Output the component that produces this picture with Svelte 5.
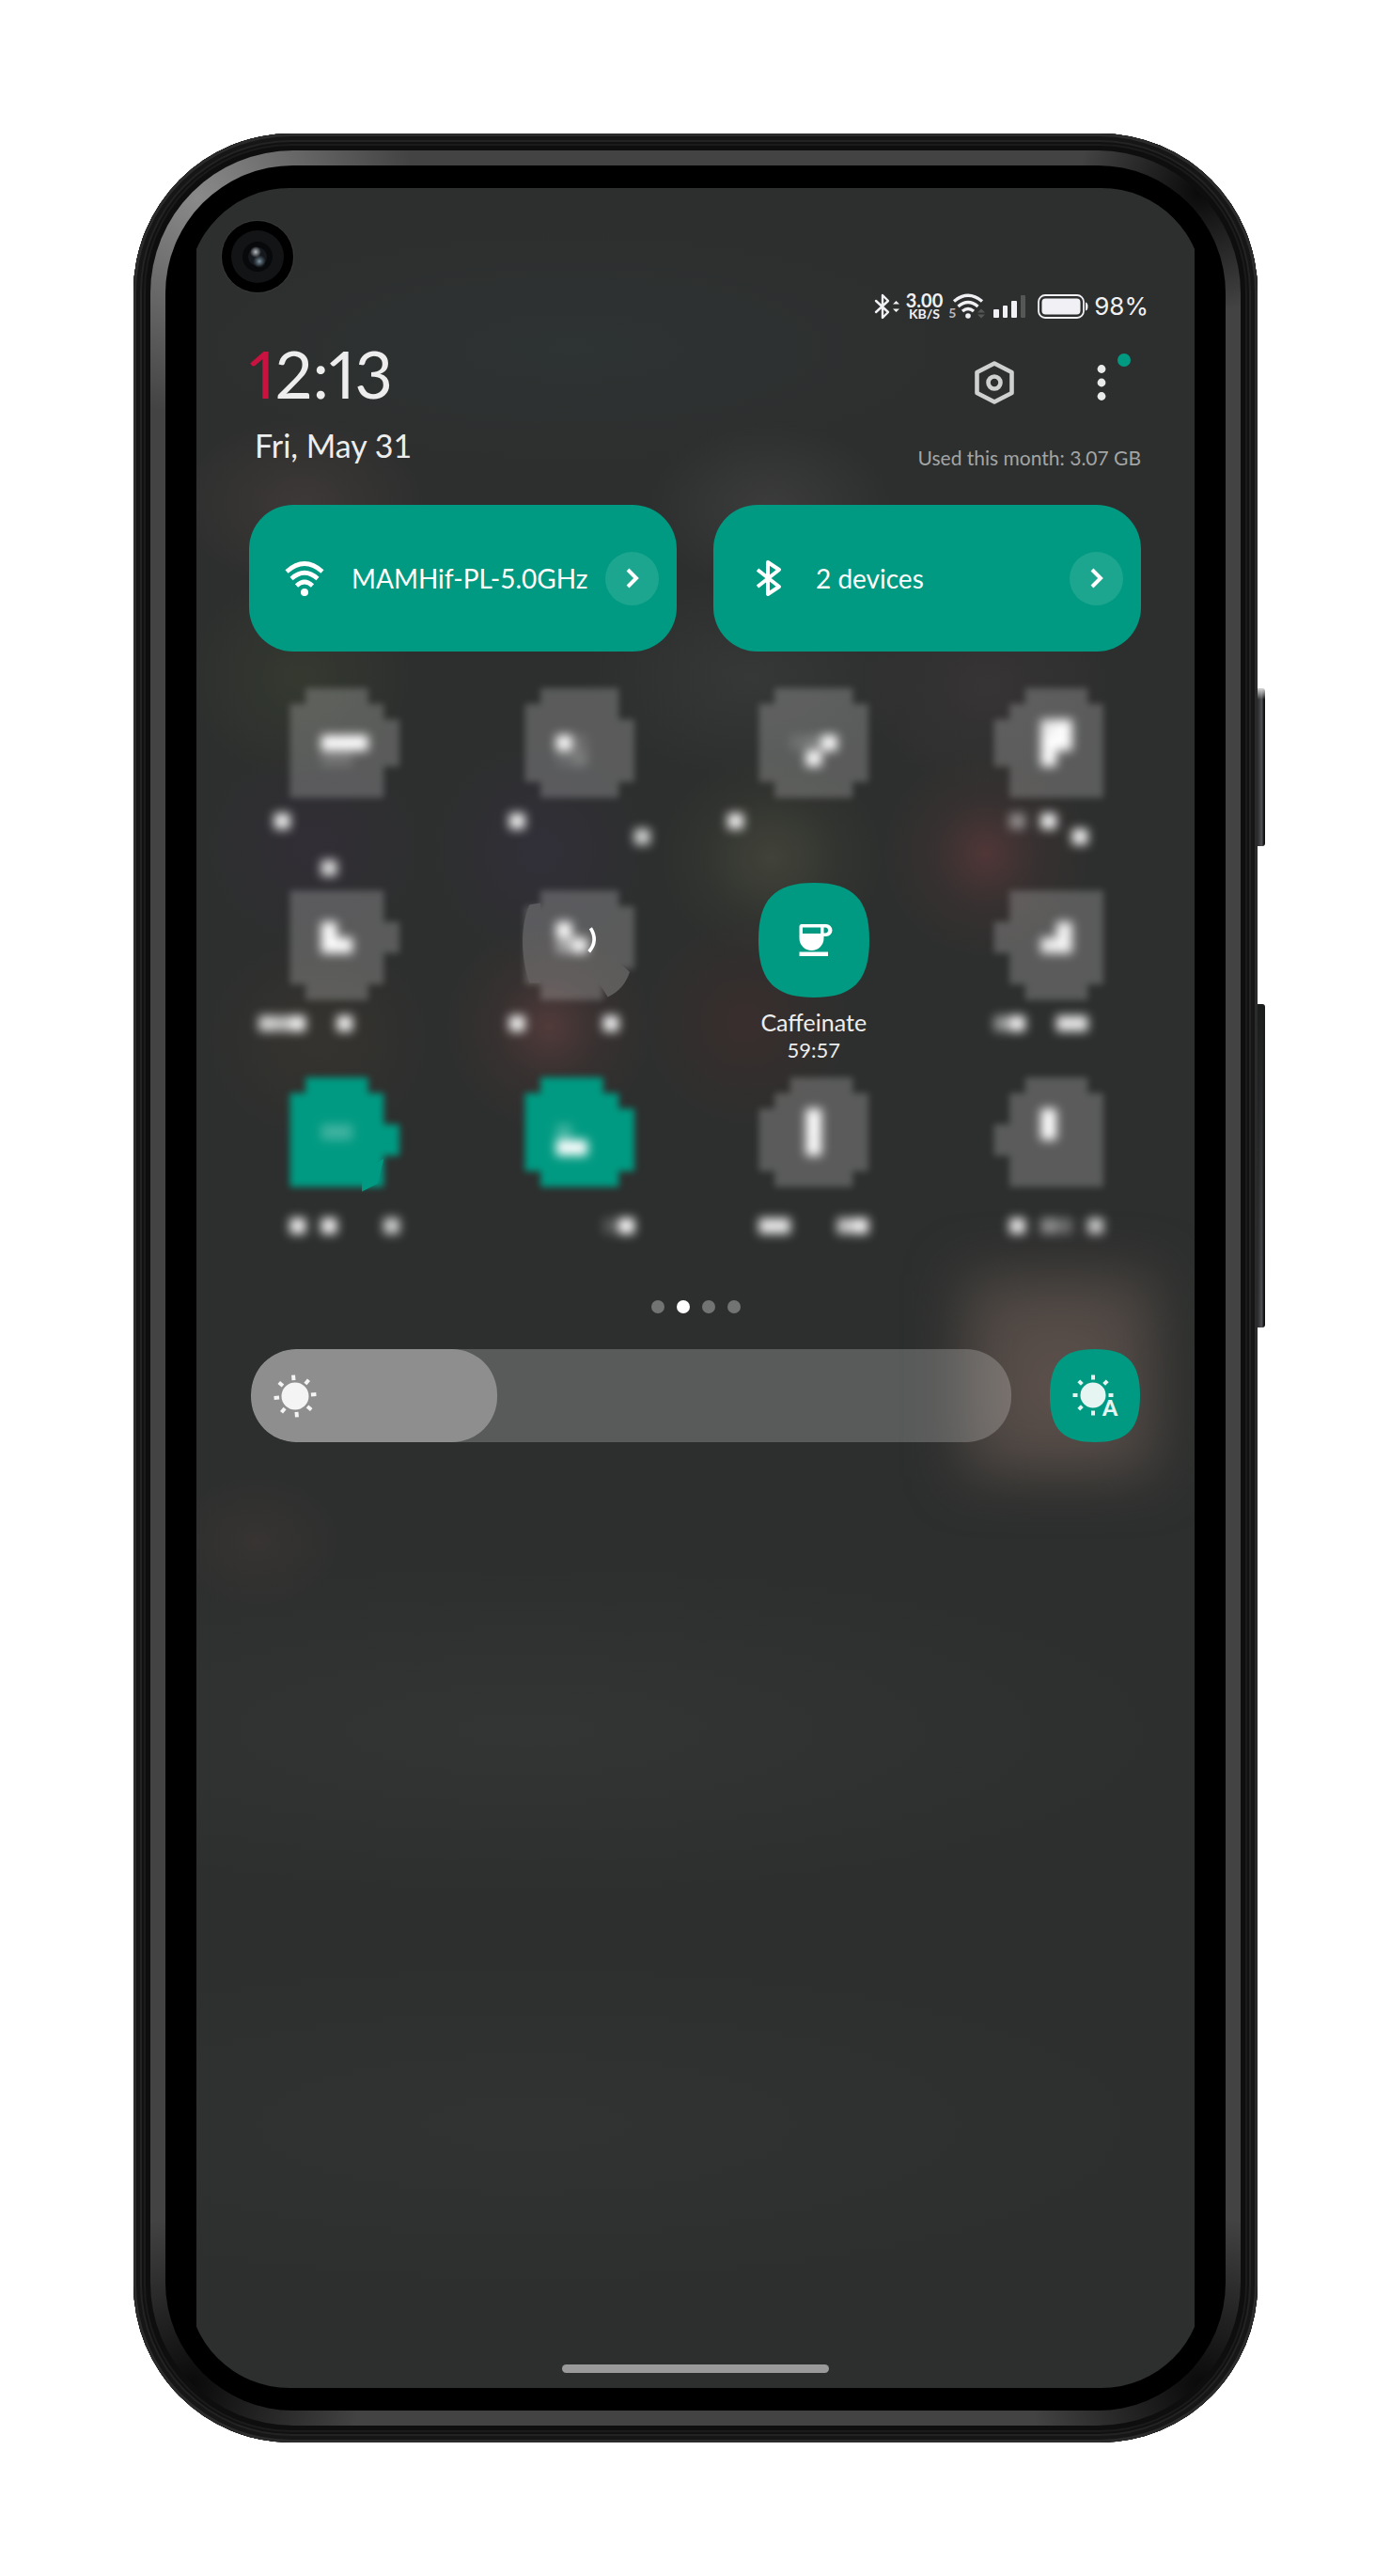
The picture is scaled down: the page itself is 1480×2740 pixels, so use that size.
<script>
  let brightness = $state(28.4);
  let page = $state(1);

  // Obscured tiles: each cell is [column, row, alpha] on a 15-column lattice.
  // `body` lists one [first, last] column span per row.
  const tiles = [
    {
      name: 'Tile 1', shift: 0,
      body: [[5, 8], [4, 9], [4, 10], [4, 10], [4, 10], [4, 9], [4, 9]],
      cells: [[6, 3, 1], [7, 3, 1], [8, 3, 1], [6, 4, 0.15], [7, 4, 0.15], [3, 8, 0.95], [6, 11, 0.85]]
    },
    {
      name: 'Tile 2', shift: 0,
      body: [[5, 9], [4, 9], [4, 10], [4, 10], [4, 10], [4, 10], [5, 9]],
      cells: [[6, 3, 1], [7, 3, 0.12], [7, 4, 0.2], [6, 4, 0.1], [3, 8, 0.95], [11, 9, 0.8]]
    },
    {
      name: 'Tile 3', shift: 0,
      body: [[5, 9], [4, 10], [4, 10], [4, 10], [4, 10], [4, 10], [5, 9]],
      cells: [[8, 3, 1], [7, 3, 0.2], [7, 4, 1], [6, 3, 0.12], [2, 8, 0.95]]
    },
    {
      name: 'Tile 4', shift: 0,
      body: [[6, 9], [5, 10], [4, 10], [4, 10], [4, 10], [5, 10], [5, 10]],
      cells: [[7, 2, 0.9], [8, 2, 1], [7, 3, 1], [8, 3, 1], [7, 4, 1], [5, 8, 0.45], [7, 8, 0.95], [9, 9, 0.95]]
    },
    {
      name: 'Tile 5', shift: 0.5,
      body: [[4, 9], [4, 9], [4, 10], [4, 10], [4, 9], [4, 9], [5, 8]],
      cells: [[6, 2, 1], [6, 3, 1], [7, 3, 1], [2, 8, 0.8], [3, 8, 0.7], [4, 8, 0.95], [7, 8, 0.95]]
    },
    {
      name: 'Tile 6', shift: 0.5,
      body: [[5, 9], [4, 10], [4, 10], [4, 10], [4, 10], [4, 9], [5, 8]],
      edge: 'M4.3 .9 C3.7 2.2 3.7 4.3 4.3 5.9 L5 5.9 L5 .8z M8.6 5.700 L9.3 6.800 C10 6.5 10.5 5.9 10.7 5.2 L9.9 4.500z',
      bracket: 'M8.2 2.4 Q8.7 3.2 8.1 3.9',
      cells: [[6, 2, 1], [6, 3, 0.45], [7, 3, 0.95], [3, 8, 0.95], [9, 8, 0.95]]
    },
    { name: 'Caffeinate', time: '59:57' },
    {
      name: 'Tile 8', shift: 0.5,
      body: [[5, 10], [5, 10], [4, 10], [4, 10], [5, 10], [5, 10], [6, 9]],
      cells: [[8, 2, 0.95], [7, 3, 0.9], [8, 3, 0.95], [4, 8, 0.5], [5, 8, 0.95], [8, 8, 0.9], [9, 8, 0.9]]
    },
    {
      name: 'Tile 9', shift: 0, on: true,
      body: [[5, 8], [4, 9], [4, 9], [4, 10], [4, 10], [4, 9], [4, 9]],
      edge: 'M8.6 6 L8.6 7.3 L9.6 6.8 L10 5.2z',
      cells: [[6, 3, 0.25], [7, 3, 0.25], [4, 9, 0.95], [6, 9, 0.95], [10, 9, 0.8]]
    },
    {
      name: 'Tile 10', shift: 0, on: true,
      body: [[5, 8], [4, 9], [4, 10], [4, 10], [4, 10], [4, 10], [5, 9]],
      cells: [[6, 3, 0.25], [6, 4, 1], [7, 4, 1], [9, 9, 0.2], [10, 9, 1]]
    },
    {
      name: 'Tile 11', shift: 0,
      body: [[6, 9], [5, 10], [4, 10], [4, 10], [4, 10], [4, 10], [5, 9]],
      cells: [[7, 2, 1], [7, 3, 1], [7, 4, 1], [4, 9, 0.9], [5, 9, 0.9], [9, 9, 0.75], [10, 9, 0.95]]
    },
    {
      name: 'Tile 12', shift: 0,
      body: [[6, 9], [5, 10], [5, 10], [4, 10], [4, 10], [5, 10], [5, 10]],
      cells: [[7, 2, 1], [7, 3, 1], [5, 9, 0.9], [7, 9, 0.45], [8, 9, 0.3], [10, 9, 0.75]]
    }
  ];

  const outline = (rows) =>
    rows.map(([a, b], y) => `M${a} ${y}H${b + 1}V${y + 1}H${a}z`).join('');

  const rays = [0, 45, 90, 135, 180, 225, 270, 315];
</script>

{#snippet wifi()}
  <path d="M3 13 Q22 -4 41 13" />
  <path d="M8 20.500 Q22 8 36 20.500" />
  <path d="M13.500 28 Q22 20 30.500 28" />
  <circle cx="22" cy="35" r="4" />
{/snippet}

{#snippet bluetooth()}
  <path d="M2 11 L25 29 L13 37 V3 L25 11 L2 29" />
{/snippet}

{#snippet chevron()}
  <span class="go">
    <svg width="14" height="22" viewBox="0 0 14 22"><path d="M2 2 L11 11 L2 20" /></svg>
  </span>
{/snippet}

<svg class="defs" width="0" height="0" aria-hidden="true">
  <defs>
    <filter id="soft" x="-2" y="-2" width="20" height="18" filterUnits="userSpaceOnUse" color-interpolation-filters="sRGB">
      <feGaussianBlur stdDeviation=".23" />
    </filter>
    <filter id="softer" x="-2" y="-2" width="20" height="18" filterUnits="userSpaceOnUse" color-interpolation-filters="sRGB">
      <feGaussianBlur stdDeviation=".31" />
    </filter>
  </defs>
</svg>

<div class="stage">
  <div class="phone">
    <span class="side power"></span>
    <span class="side volume"></span>
    <div class="rim">
      <div class="bezel">
        <div class="glass">
          <svg class="camera" viewBox="0 0 78 78" aria-hidden="true">
            <defs>
              <radialGradient id="hi"><stop offset="0" stop-color="#b4babf" /><stop offset="1" stop-color="#b4babf" stop-opacity="0" /></radialGradient>
              <radialGradient id="lo"><stop offset="0" stop-color="#8197a3" /><stop offset="1" stop-color="#52636e" stop-opacity="0" /></radialGradient>
            </defs>
            <circle cx="39" cy="39" r="38.500" fill="#000" stroke="#555" stroke-width=".5" />
            <circle cx="39" cy="39" r="28" fill="#131416" />
            <circle cx="39" cy="39" r="16" fill="#08090b" />
            <circle cx="39" cy="39" r="10" fill="#15181d" />
            <circle cx="37" cy="34" r="6" fill="url(#hi)" />
            <circle cx="41" cy="44" r="7" fill="url(#lo)" />
          </svg>

          <main class="screen">
            <div class="status">
              <svg width="28" height="28" viewBox="0 0 28 28" class="line" stroke-width="2.400">
                <path d="M2 8 L15 20 L9 26 V2 L15 8 L2 20" />
                <path d="M20 11.500 L23.500 8 L27 11.500z M20 16.500 L23.500 20 L27 16.500z" fill="#f1f1f5" stroke="none" />
              </svg>
              <span class="rate"><b>3.00</b><b class="unit">KB/S</b></span>
              <span class="net">
                <i>5</i>
                <svg width="38" height="28" viewBox="0 0 38 28" class="line" stroke-width="3.400">
                  <path d="M2 8.500 Q17 -4 32 8.500 M6.500 14 Q17 5 27.500 14 M11 19 Q17 14 23 19" stroke-linecap="butt" />
                  <circle cx="17" cy="24" r="2.800" fill="#f1f1f5" stroke="none" />
                  <path d="M27 20.500 L31 16.500 L35 20.500z M27 22.500 L31 26.500 L35 22.500z" fill="#555756" stroke="none" />
                </svg>
              </span>
              <svg width="35" height="26" viewBox="0 0 35 26" fill="#f1f1f5">
                <rect x="0" y="16" width="6" height="9" rx="1" /><rect x="10" y="12" width="5" height="13" rx="1" />
                <rect x="19" y="7" width="6" height="18" rx="1" /><rect x="29" y="1" width="5" height="24" rx="1" fill="#555756" />
              </svg>
              <svg class="battery" width="54" height="26" viewBox="0 0 54 26">
                <rect x="1" y="1" width="48" height="24" rx="7" fill="none" stroke="#f1f1f5" stroke-width="1.800" />
                <rect x="4.500" y="4.500" width="41" height="17" rx="4" fill="#f1f1f5" />
                <path d="M51 8.500 Q53.500 9 53.500 13 T51 17.500z" fill="#f1f1f5" />
              </svg>
              <span class="percent">98%</span>
            </div>

            <header>
              <div>
                <h1><em>1</em>2:13</h1>
                <p class="date">Fri, May 31</p>
              </div>
              <div class="tools">
                <div class="buttons">
                  <button aria-label="Settings">
                    <svg width="44" height="48" viewBox="0 0 44 48" fill="none" stroke="#cfd1d0" stroke-linejoin="round">
                      <path d="M22 3.500 L40.500 13 V35 L22 44.500 L3.500 35 V13z" stroke-width="4.600" />
                      <circle cx="22" cy="24" r="6.500" stroke-width="4.600" />
                    </svg>
                  </button>
                  <button aria-label="More options" class="more">
                    <svg width="10" height="40" viewBox="0 0 10 40" fill="#e9ebea">
                      <circle cx="5" cy="5.500" r="4.400" /><circle cx="5" cy="20" r="4.400" /><circle cx="5" cy="34.500" r="4.400" />
                    </svg>
                    <span class="badge"></span>
                  </button>
                </div>
                <p class="usage">Used this month: 3.07 GB</p>
              </div>
            </header>

            <section class="cards">
              <button class="card">
                <svg class="glyph" width="44" height="40" viewBox="0 0 44 40" stroke-width="4.600">{@render wifi()}</svg>
                <span class="name">MAMHif-PL-5.0GHz</span>
                {@render chevron()}
              </button>
              <button class="card">
                <svg class="glyph bt" width="44" height="40" viewBox="-8 0 44 40" stroke-width="4">{@render bluetooth()}</svg>
                <span class="name">2 devices</span>
                {@render chevron()}
              </button>
            </section>

            <section class="grid">
              {#each tiles as tile}
                {#if tile.body}
                  <button class="tile" class:on={tile.on} aria-label={tile.name}>
                    <svg class="mosaic" viewBox="0 {-tile.shift} 15 12">
                      <g class="plate">
                        <path d={outline(tile.body)} filter="url(#soft)" />
                        {#if tile.edge}<path d={tile.edge} />{/if}
                      </g>
                      <g fill="#fff" filter="url(#softer)">
                        {#each tile.cells as [x, y, alpha]}
                          <rect {x} {y} width="1" height="1" fill-opacity={alpha} />
                        {/each}
                      </g>
                      {#if tile.bracket}<path class="bracket" d={tile.bracket} />{/if}
                    </svg>
                  </button>
                {:else}
                  <button class="tile">
                    <svg class="squircle" width="118" height="122" viewBox="0 0 118 122">
                      <path fill="#009a82" d="M59 0 C101 0 118 18 118 61 S101 122 59 122 0 104 0 61 17 0 59 0z" />
                      <path fill="#fff" fill-rule="evenodd" d="M46 44 H72 A6.500 6.500 0 0 1 72 57 H69.500 V59 A13 13 0 0 1 43.500 59 V46.500 Q43.500 44 46 44z M47 47.500 V54 H66 V47.500z M69.500 47.500 V53.500 H71 A3 3 0 0 0 71 47.500z" />
                      <path fill="#fff" d="M43.500 73.500 H74 V78 H43.500z" />
                    </svg>
                    <span class="label">{tile.name}</span>
                    <span class="timer">{tile.time}</span>
                  </button>
                {/if}
              {/each}
            </section>

            <nav class="pager" aria-label="Pages">
              {#each [0, 1, 2, 3] as i}
                <button class:current={page === i} aria-label="Page {i + 1}" onclick={() => (page = i)}></button>
              {/each}
            </nav>

            <section class="light">
              <label class="slider">
                <span class="fill" style:width="{4 + brightness}%"></span>
                <svg class="sun" width="48" height="48" viewBox="-24 -24 48 48" fill="#f4f4f4">
                  <circle r="14.500" />
                  {#each rays as angle}
                    <rect x="-2" y="-22.500" width="4" height="5.500" transform="rotate({angle - 5})" />
                  {/each}
                </svg>
                <input type="range" min="0" max="96" step="any" bind:value={brightness} aria-label="Brightness" />
              </label>
              <button class="auto" aria-label="Automatic brightness">
                <svg viewBox="0 0 96 99">
                  <path fill="#009a82" d="M48 0 C82 0 96 14 96 49.500 S82 99 48 99 0 85 0 49.500 14 0 48 0z" />
                  <g transform="translate(46 49)" fill="#e6f5f2">
                    <circle r="13.500" />
                    {#each rays.filter((a) => a !== 135) as angle}
                      <rect x="-2" y="-21.500" width="4" height="5" transform="rotate({angle})" />
                    {/each}
                  </g>
                  <text x="64" y="71" text-anchor="middle">A</text>
                </svg>
              </button>
            </section>

            <span class="home"></span>
          </main>
        </div>
      </div>
    </div>
  </div>
</div>

<style>
  :global(body) {
    background: #fff;
  }
  .defs {
    position: absolute;
  }
  .stage {
    box-sizing: border-box;
    padding: 142px;
    font-family: Lato, 'Open Sans', sans-serif;
    color: #ededed;
  }
  .phone,
  .rim,
  .bezel,
  .glass {
    box-sizing: border-box;
  }
  .phone {
    position: relative;
    display: grid;
    aspect-ratio: 1196 / 2456;
    padding: 18px;
    border-radius: 168px;
    background: #0e0e0e;
    box-shadow:
      inset 0 0 0 3px #2b2b2b,
      inset 0 0 0 7px #161616,
      inset 0 0 0 9px #232323,
      inset 0 0 0 11px #111,
      inset 0 0 0 13px #1b1b1b;
  }
  .side {
    position: absolute;
    left: 100%;
    width: 8px;
    border-radius: 0 3px 3px 0;
  }
  .power {
    top: 590px;
    height: 168px;
    background:
      linear-gradient(#d8d8d8, transparent 12px),
      linear-gradient(90deg, #2c2c2e, #505154 55%, #111 85%);
  }
  .volume {
    top: 926px;
    height: 344px;
    background:
      linear-gradient(#1b1c1c, transparent 95%),
      linear-gradient(90deg, #2c2c2e, #505154 55%, #111 85%);
  }
  .rim {
    display: grid;
    padding: 16px;
    border-radius: 152px;
    background:
      radial-gradient(circle at 50px 50px, #8a8a8a, transparent 230px),
      radial-gradient(circle at calc(100% - 44px) 44px, #0a0a0a, transparent 130px),
      radial-gradient(circle at 44px calc(100% - 44px), #0a0a0a, transparent 180px),
      radial-gradient(circle at calc(100% - 44px) calc(100% - 44px), #0a0a0a, transparent 180px),
      #434343;
  }
  .bezel {
    display: grid;
    padding: 24px;
    border-radius: 136px;
    background: #000;
  }
  .glass {
    position: relative;
    display: grid;
    padding: 0 9px;
    border-radius: 108px;
    overflow: hidden;
  }
  .camera {
    position: absolute;
    top: 34px;
    left: 35px;
    width: 78px;
    height: 78px;
    z-index: 1;
  }
  .screen {
    position: relative;
    isolation: isolate;
    display: flex;
    flex-direction: column;
    overflow: hidden;
    background:
      radial-gradient(ellipse 130px 90px at 112px 335px, #453d3caa, transparent),
      radial-gradient(ellipse 130px 90px at 610px 340px, #47474788, transparent),
      radial-gradient(ellipse 420px 130px at 400px 170px, #2e373877, transparent),
      radial-gradient(ellipse 120px 110px at 110px 520px, #3c443277, transparent),
      radial-gradient(ellipse 130px 110px at 840px 530px, #423a3b77, transparent),
      radial-gradient(ellipse 170px 110px at 590px 520px, #40424177, transparent),
      radial-gradient(ellipse 110px 110px at 840px 708px, #503637, #46333466 50%, transparent),
      radial-gradient(ellipse 120px 110px at 612px 712px, #44463bdd, #40413644 60%, transparent),
      radial-gradient(ellipse 120px 110px at 125px 700px, #352c3c88, transparent),
      radial-gradient(ellipse 120px 120px at 365px 705px, #352f4288, transparent),
      radial-gradient(ellipse 110px 110px at 375px 892px, #513a3a, #46343466 50%, transparent),
      radial-gradient(ellipse 110px 110px at 585px 888px, #432c2c88, transparent),
      radial-gradient(ellipse 120px 110px at 130px 905px, #40383077, transparent),
      radial-gradient(ellipse 90px 70px at 64px 1440px, #40383688, transparent),
      radial-gradient(ellipse 700px 180px at 350px 1640px, #333534, transparent),
      radial-gradient(ellipse 700px 180px at 350px 2060px, #313332, transparent),
      #2d2f2e;
  }
  .screen::before {
    content: '';
    position: absolute;
    z-index: -1;
    top: 1155px;
    right: 40px;
    width: 208px;
    height: 215px;
    background: radial-gradient(ellipse at 50% 55%, #5f524d, #48433f 90%);
    filter: blur(28px);
  }
  p,
  h1 {
    margin: 0;
    font-weight: 400;
  }
  button {
    padding: 0;
    border: 0;
    background: none;
    color: inherit;
    font: inherit;
    cursor: pointer;
  }
  .status {
    display: flex;
    align-items: center;
    justify-content: flex-end;
    gap: 6px;
    height: 36px;
    padding: 108px 49px 0 0;
    color: #f1f1f5;
  }
  .line {
    fill: none;
    stroke: #f1f1f5;
    stroke-linecap: round;
    stroke-linejoin: round;
  }
  .rate {
    display: grid;
    justify-items: center;
    font: 700 20px/16px Lato, sans-serif;
  }
  .rate b {
    font-weight: 700;
  }
  .rate .unit {
    font-size: 14px;
    line-height: 14px;
  }
  .net {
    display: flex;
    align-items: flex-end;
  }
  .net i {
    width: 4px;
    font: 700 14px/14px Lato, sans-serif;
    color: #b9bab9;
  }
  .battery {
    margin-left: 6px;
  }
  .percent {
    font: 400 26px/36px Inter, sans-serif;
  }
  header {
    display: flex;
    justify-content: space-between;
    height: 193px;
    padding: 0 57px 0 56px;
  }
  h1 {
    padding-top: 8px;
    font-size: 70px;
    font-weight: 400;
    line-height: 90px;
    font-variant-numeric: proportional-nums;
  }
  em {
    font-style: normal;
    color: #c8123f;
  }
  .date {
    padding: 10px 0 0 6px;
    font-size: 34px;
    line-height: 44px;
  }
  .tools {
    display: flex;
    flex-direction: column;
    align-items: flex-end;
  }
  .buttons {
    display: flex;
    align-items: center;
    gap: 87px;
    padding: 39px 37px 0 0;
  }
  .buttons svg {
    display: block;
  }
  .more {
    position: relative;
  }
  .badge {
    position: absolute;
    top: -11px;
    left: 22px;
    width: 14px;
    height: 14px;
    border-radius: 50%;
    background: #009a82;
  }
  .usage {
    padding-top: 43px;
    font-size: 21px;
    line-height: 26px;
    color: #a3a5a4;
  }
  .cards {
    display: grid;
    grid-template-columns: 1fr 1fr;
    gap: 39px;
    padding: 0 57px 0 56px;
  }
  .card {
    display: flex;
    align-items: center;
    height: 156px;
    padding: 0 19px 0 37px;
    border-radius: 47px;
    background: #009a82;
    color: #fff;
    font-size: 28px;
    line-height: 36px;
    text-align: left;
  }
  .name {
    flex: 1;
    padding-left: 28px;
    white-space: nowrap;
  }
  .glyph {
    fill: none;
    stroke: #fff;
    flex: none;
  }
  .glyph :global(circle) {
    fill: #fff;
    stroke: none;
  }
  .bt {
    stroke-linejoin: round;
  }
  .go {
    display: grid;
    place-items: center;
    width: 57px;
    height: 57px;
    border-radius: 50%;
    background: #1ca58f;
  }
  .go path {
    fill: none;
    stroke: #fff;
    stroke-width: 4;
  }
  .grid {
    display: grid;
    grid-template-columns: repeat(4, 1fr);
    grid-auto-rows: 207px;
    padding: 39px 31px 0 33px;
  }
  .tile {
    display: flex;
    flex-direction: column;
    align-items: center;
    color: #ededed;
  }
  .mosaic {
    width: 100%;
    overflow: visible;
  }
  .plate {
    fill: #fff;
    opacity: 0.21;
  }
  .on .plate {
    fill: #009a82;
    opacity: 1;
  }
  .bracket {
    fill: none;
    stroke: #fff;
    stroke-width: 0.22;
  }
  .squircle {
    display: block;
  }
  .label {
    padding-top: 10px;
    font-size: 25px;
    line-height: 32px;
  }
  .timer {
    font-size: 22px;
    line-height: 28px;
  }
  .pager {
    display: flex;
    justify-content: center;
    gap: 13px;
    padding-top: 30px;
  }
  .pager button {
    width: 14px;
    height: 14px;
    border-radius: 50%;
    background: #727473;
  }
  .pager .current {
    background: #fff;
  }
  .light {
    display: flex;
    gap: 41px;
    padding: 38px 58px 0 58px;
  }
  .slider {
    position: relative;
    display: flex;
    flex: 1;
    align-items: center;
    height: 99px;
    border-radius: 48px;
    overflow: hidden;
    background: #ffffff36;
  }
  .fill {
    position: absolute;
    inset: 0 auto 0 0;
    border-radius: 48px;
    background: #ffffff50;
  }
  .sun {
    position: relative;
    margin-left: 23px;
  }
  .slider input {
    position: absolute;
    inset: 0;
    width: 100%;
    margin: 0;
    opacity: 0;
  }
  .auto {
    width: 96px;
    height: 99px;
  }
  .auto svg {
    display: block;
  }
  .auto text {
    font: 900 23px Lato, sans-serif;
    fill: #e6f5f2;
  }
  .home {
    align-self: center;
    width: 284px;
    height: 9px;
    margin: auto 0 16px;
    border-radius: 5px;
    background: #9a9a9a;
  }
</style>
